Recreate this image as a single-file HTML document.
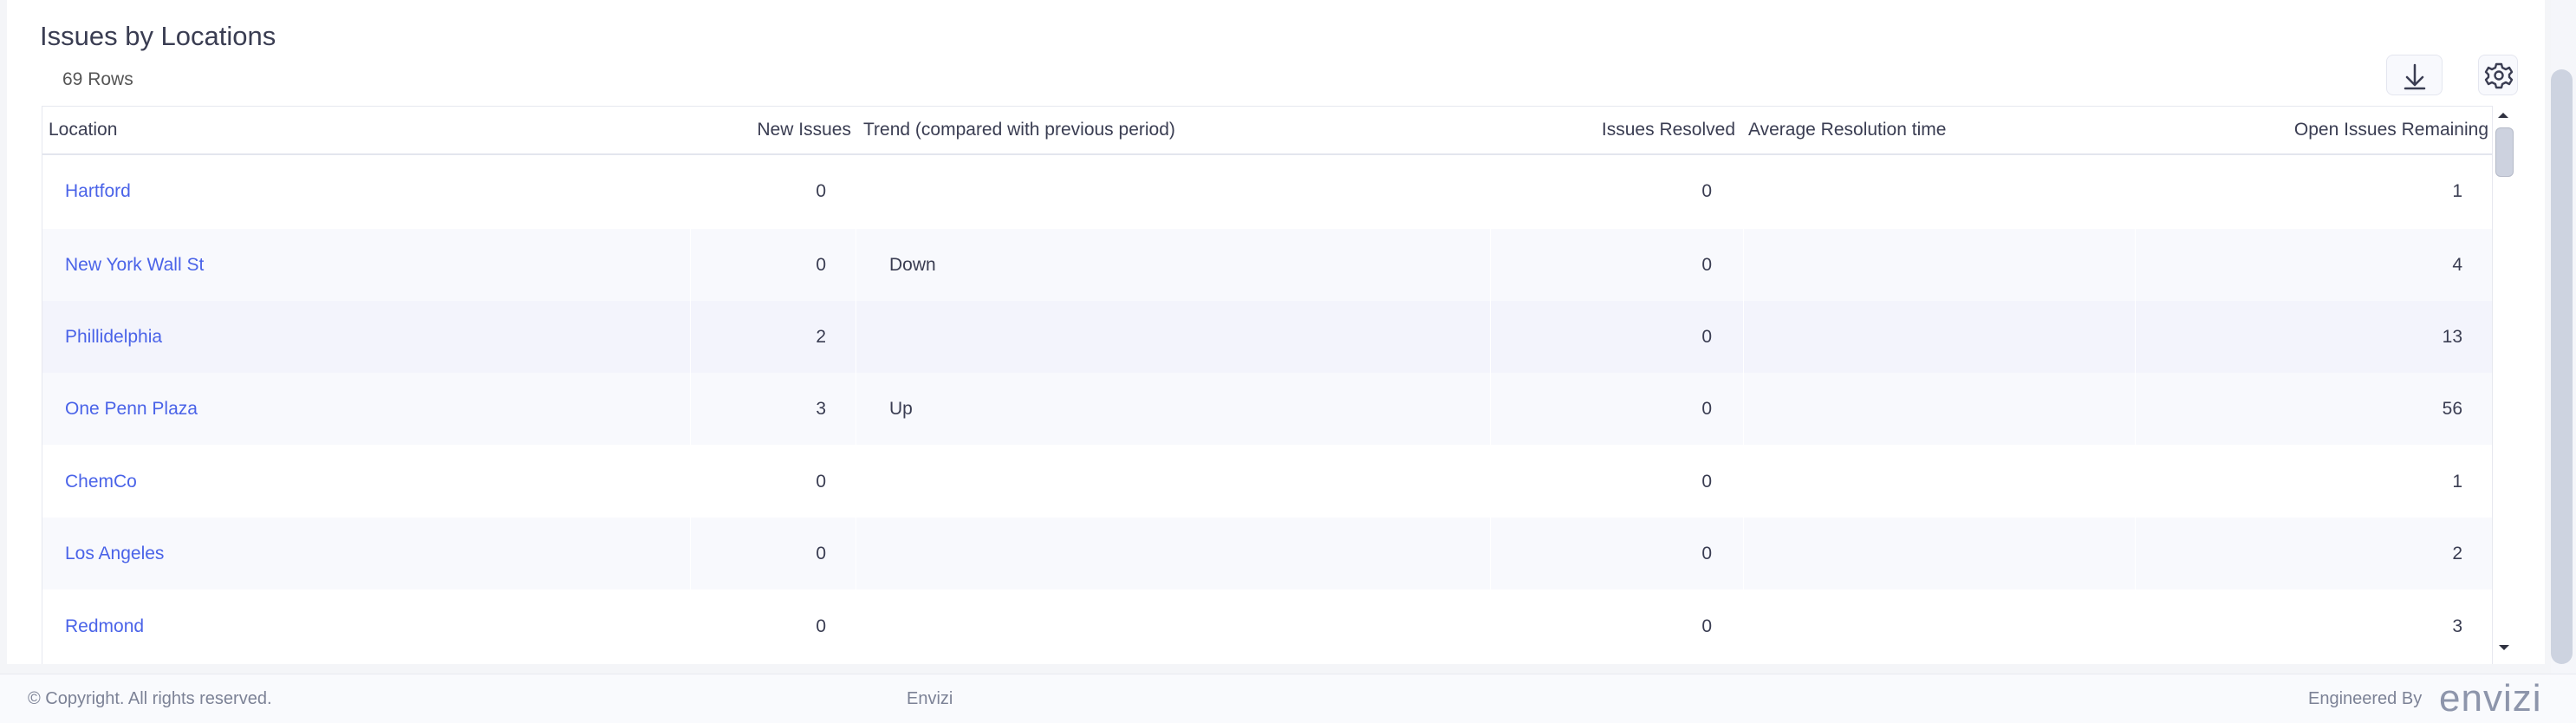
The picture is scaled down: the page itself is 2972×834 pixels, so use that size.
<!DOCTYPE html>
<html><head><meta charset="utf-8"><style>
*{margin:0;padding:0;box-sizing:border-box}
body{width:2972px;height:834px;background:#f4f5f8;font-family:"Liberation Sans",sans-serif;color:#3a3d52;position:relative;overflow:hidden}
.card{position:absolute;left:8px;top:0;width:2928px;height:766px;background:#fff}
.abs{position:absolute;white-space:nowrap}
.t{font-size:31px;left:38px;top:24px;color:#3a3d52}
.rows{font-size:21px;left:64px;top:80px;color:#555}
.btn{position:absolute;top:63px;height:47px;border:1px solid #e4e6ef;border-radius:8px;background:#f8f9fd}
.tbl{position:absolute;left:48px;top:122px;width:2828px;height:644px;border:1px solid #e6e8ef;border-bottom:none;overflow:hidden}
.hd{position:absolute;left:0;top:0;width:100%;height:56px;border-bottom:2px solid #e3e6ee;font-size:21px}
.row{position:absolute;left:0;width:100%;height:83px;font-size:21px}
.c{position:absolute;top:0;height:100%;border-right:1px solid #fff}
.tx{position:absolute;top:50%;transform:translateY(-50%);white-space:nowrap}
a{color:#4a63e8;text-decoration:none}
.foot{position:absolute;left:0;top:777px;width:2972px;height:57px;background:#f9fafd;border-top:1px solid #e8eaf0;color:#7c8296;font-size:20px}
</style></head><body>
<div class="card">
<div class="abs t">Issues by Locations</div>
<div class="abs rows">69 Rows</div>
</div>
<div class="btn" style="left:2753px;width:65px"><svg width="65" height="47" viewBox="0 0 65 47"><path d="M32 11V33M23 25L32 34L41 25M21 38H43" stroke="#3a3d52" stroke-width="2.5" fill="none" stroke-linecap="round" stroke-linejoin="round"/></svg></div>
<div class="btn" style="left:2859px;width:46px"><svg width="46" height="47" viewBox="0 0 46 47"><g transform="translate(23,23)" stroke="#3a3d52" stroke-width="2.4" fill="none"><path d="M-3,-13 L3,-13 L4,-9 L8,-7 L12,-9 L15,-4 L12,-1 L12,2 L15,5 L12,10 L8,8 L4,10 L3,14 L-3,14 L-4,10 L-8,8 L-12,10 L-15,5 L-12,2 L-12,-1 L-15,-4 L-12,-9 L-8,-7 L-4,-9 Z" stroke-linejoin="round"/><circle r="4.5"/></g></svg></div>
<div class="tbl">
<div class="hd">
<div class="tx" style="left:7px">Location</div>
<div class="tx" style="right:1893px">New Issues</div>
<div class="tx" style="left:947px">Trend (compared with previous period)</div>
<div class="tx" style="right:873px">Issues Resolved</div>
<div class="tx" style="left:1968px">Average Resolution time</div>
<div class="tx" style="right:4px">Open Issues Remaining</div>
</div>
</div>
<div style="position:absolute;left:2876px;top:122px;width:26px;height:644px;background:#fff">
<div style="position:absolute;left:6px;top:8px;border:6px solid transparent;border-bottom:6px solid #2f3140;border-top:0;width:0;height:0"></div>
<div style="position:absolute;left:3px;top:25px;width:21px;height:57px;background:#cdd2df;border:1px solid #b5bac8;border-radius:6px"></div>
<div style="position:absolute;left:7px;top:622px;border:6px solid transparent;border-top:6px solid #2f3140;border-bottom:0;width:0;height:0"></div>
</div>
<div style="position:absolute;left:2943px;top:0;width:29px;height:777px;background:#f5f6fa"><div style="position:absolute;left:0;top:80px;width:25px;height:686px;background:#cdd3e0;border-radius:13px"></div></div>
<div class="foot">
<div class="abs" style="left:32px;top:17px">© Copyright. All rights reserved.</div>
<div class="abs" style="left:1046px;top:17px">Envizi</div>
<div class="abs" style="left:2663px;top:17px">Engineered By</div>
<div class="abs" style="left:2814px;top:3px;font-size:44px;letter-spacing:1px;color:#8d95ab">envizi</div>
</div>
<script>
var d=[["Hartford","0","","0","1","#fff"],["New York Wall St","0","Down","0","4","#f8f9fd"],["Phillidelphia","2","","0","13","#f3f4fc"],["One Penn Plaza","3","Up","0","56","#f8f9fd"],["ChemCo","0","","0","1","#fff"],["Los Angeles","0","","0","2","#f8f9fd"],["Redmond","0","","0","3","#fff"]];
var h="",tops=[178,263,346,429,513,596,680];
d.forEach(function(r,i){var t=tops[i]-122;h+='<div class="row" style="top:'+t+'px;background:'+r[5]+'">'+
'<div class="c" style="left:0;width:748px"><a class="tx" style="left:26px">'+r[0]+'</a></div>'+
'<div class="c" style="left:748px;width:191px"><span class="tx" style="right:34px">'+r[1]+'</span></div>'+
'<div class="c" style="left:939px;width:732px"><span class="tx" style="left:38px">'+r[2]+'</span></div>'+
'<div class="c" style="left:1671px;width:292px"><span class="tx" style="right:36px">'+r[3]+'</span></div>'+
'<div class="c" style="left:1963px;width:452px"></div>'+
'<div class="c" style="left:2415px;width:413px;border:none"><span class="tx" style="right:36px">'+r[4]+'</span></div></div>';});
document.querySelector('.tbl').insertAdjacentHTML('beforeend',h);
</script>
</body></html>
